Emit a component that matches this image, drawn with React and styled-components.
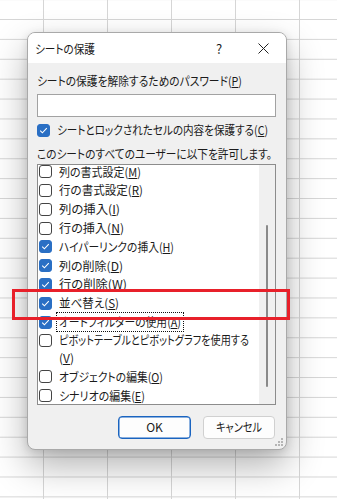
import React, { useLayoutEffect, useRef, useState } from "react";
import styled, { createGlobalStyle } from "styled-components";

const Global = createGlobalStyle`
  html, body { margin: 0; padding: 0; }
  body {
    width: 337px;
    height: 499px;
    overflow: hidden;
    font-family: "Noto Sans CJK JP", "Noto Sans", sans-serif;
    font-feature-settings: "palt";
    color: #1b1b1b;
  }
`;

const Sheet = styled.div`
  position: relative;
  width: 337px;
  height: 499px;
  background-color: #fff;
  background-image:
    linear-gradient(to right, #d6d6d6 0, #d6d6d6 1px, transparent 1px),
    linear-gradient(to bottom, #d6d6d6 0, #d6d6d6 1px, transparent 1px);
  background-size: 64px 100%, 100% 19.9px;
  background-position: 43px 0, 0 19px;
`;

const Dialog = styled.div`
  position: absolute;
  left: 27px;
  top: 32px;
  width: 260px;
  height: 418px;
  box-sizing: border-box;
  border: 1px solid #a9a9a9;
  border-radius: 8px;
  overflow: hidden;
  background: #f0f0f0;
  box-shadow: 0 16px 36px rgba(0, 0, 0, 0.3), 0 2px 8px rgba(0, 0, 0, 0.12);
  display: flex;
  flex-direction: column;
  font-size: 12px;
`;

const TitleBar = styled.div`
  height: 30px;
  background: #fff;
  display: flex;
  align-items: center;
  padding: 0 0 0 7px;
`;

const Title = styled.div`
  flex: 1;
`;

const TitleButton = styled.div`
  width: ${(p) => p.$w}px;
  padding-left: ${(p) => p.$pl || 0}px;
  box-sizing: border-box;
  display: flex;
  justify-content: center;
  align-items: center;
  font-size: 13px;
`;

const Body = styled.div`
  flex: 1;
  padding: 9px 10px 0 9px;
  display: flex;
  flex-direction: column;
  line-height: 18px;
`;

const Label = styled.div`
  white-space: nowrap;
`;

const Input = styled.div`
  margin-top: 4px;
  height: 23px;
  box-sizing: border-box;
  border: 1px solid #a2a2a2;
  background: #fff;
`;

const CheckRow = styled.label`
  display: flex;
  align-items: ${(p) => (p.$top ? "flex-start" : "center")};
  gap: 7px;
  margin-top: ${(p) => p.$mt || 0}px;
  padding-left: ${(p) => p.$pl || 0}px;
  min-height: 18.8px;
  white-space: nowrap;
`;

const BoxWrap = styled.span`
  flex: none;
  width: 13px;
  height: 13px;
  margin-top: ${(p) => (p.$top ? 3 : 0)}px;
  box-sizing: border-box;
  border-radius: 3px;
  border: 1px solid ${(p) => (p.$checked ? "#2a6fc4" : "#444")};
  background: ${(p) => (p.$checked ? "#2a6fc4" : "#fff")};
  display: flex;
  align-items: center;
  justify-content: center;
`;

const Text = styled.span`
  display: inline-block;
`;

const FitOuter = styled.span`
  display: inline-block;
  width: ${(p) => p.$w}px;
  white-space: nowrap;
  ${(p) =>
    p.$focus &&
    `outline: 1px dotted #111; outline-offset: 0px; padding: 0 2px; margin-left: -2px;`}
`;

const FitInner = styled.span`
  display: inline-block;
  white-space: nowrap;
  transform-origin: 0 50%;
`;

function Fit({ w, focus, children }) {
  const ref = useRef(null);
  const [s, setS] = useState(1);
  useLayoutEffect(() => {
    const n = ref.current ? ref.current.getBoundingClientRect().width : 0;
    if (n) setS(w / n);
  }, [w]);
  return (
    <FitOuter $w={w} $focus={focus}>
      <FitInner ref={ref} style={{ transform: `scaleX(${s})` }}>
        {children}
      </FitInner>
    </FitOuter>
  );
}

const Hint = styled.div`
  margin-top: 5px;
  white-space: nowrap;
`;

const ListBox = styled.div`
  margin-top: 1px;
  height: 241px;
  box-sizing: border-box;
  border: 1px solid #8c8c8c;
  background: #fff;
  display: flex;
  overflow: hidden;
`;

const ListInner = styled.div`
  flex: 1;
  min-width: 0;
  overflow: hidden;
  margin-top: -2.5px;
`;

const Track = styled.div`
  flex: none;
  width: 16px;
  background: #f0f0f0;
  display: flex;
  justify-content: center;
  padding-top: 60px;
`;

const Thumb = styled.div`
  width: 2px;
  height: 162px;
  border-radius: 1px;
  background: #8a8a8a;
`;

const Buttons = styled.div`
  margin-top: 11px;
  display: flex;
  justify-content: flex-end;
  gap: 12px;
  padding-right: 1px;
`;

const Button = styled.div`
  width: ${(p) => p.$w}px;
  height: 23px;
  box-sizing: border-box;
  border-radius: 4px;
  background: #fdfdfd;
  border: 1px solid ${(p) => (p.$primary ? "#1a64c0" : "#d0d0d0")};
  ${(p) => p.$primary && "box-shadow: inset 0 0 0 0.5px #1a64c0;"}
  display: flex;
  align-items: center;
  justify-content: center;
`;

const Grip = styled.svg`
  position: absolute;
  right: 2px;
  bottom: 2px;
`;

const Highlight = styled.div`
  position: absolute;
  left: 12px;
  top: 289px;
  width: 278px;
  height: 31px;
  box-sizing: border-box;
  border: 3px solid #e8202a;
`;

function Check({ checked, top }) {
  return (
    <BoxWrap $checked={checked} $top={top}>
      {checked && (
        <svg width="9" height="9" viewBox="0 0 9 9">
          <polyline
            points="1.2,4.6 3.4,6.8 7.8,2.2"
            fill="none"
            stroke="#fff"
            strokeWidth="1.1"
          />
        </svg>
      )}
    </BoxWrap>
  );
}

const items = [
  { t: "列の書式設定", k: "M", c: false, w: 82 },
  { t: "行の書式設定", k: "R", c: false, w: 84 },
  { t: "列の挿入", k: "I", c: false, w: 61 },
  { t: "行の挿入", k: "N", c: false, w: 65 },
  { t: "ハイパーリンクの挿入", k: "H", c: true, w: 115 },
  { t: "列の削除", k: "D", c: true, w: 64 },
  { t: "行の削除", k: "W", c: true, w: 68 },
  { t: "並べ替え", k: "S", c: true, w: 60 },
  { t: "オートフィルターの使用", k: "A", c: true, w: 122, focus: true },
  { t: "ピボットテーブルとピボットグラフを使用する", k: "V", c: false, w: 190, wrap: true },
  { t: "オブジェクトの編集", k: "O", c: false, w: 104 },
  { t: "シナリオの編集", k: "E", c: false, w: 86 },
];

export default function App() {
  return (
    <>
      <Global />
      <Sheet>
        <Dialog>
          <TitleBar>
            <Title>
              <Fit w={60}>シートの保護</Fit>
            </Title>
            <TitleButton $w={44} $pl={2}>?</TitleButton>
            <TitleButton $w={46}>
              <svg width="11" height="11" viewBox="0 0 11 11">
                <path d="M0.5 0.5 L10.5 10.5 M10.5 0.5 L0.5 10.5" stroke="#222" strokeWidth="1" />
              </svg>
            </TitleButton>
          </TitleBar>
          <Body>
            <Label>
              <Fit w={205}>
                シートの保護を解除するためのパスワード(<u>P</u>)
              </Fit>
            </Label>
            <Input />
            <CheckRow $mt={4}>
              <Check checked />
              <Fit w={211}>
                シートとロックされたセルの内容を保護する(<u>C</u>)
              </Fit>
            </CheckRow>
            <Hint>
              <Fit w={235}>このシートのすべてのユーザーに以下を許可します。</Fit>
            </Hint>
            <ListBox>
              <ListInner>
                {items.map((it) => (
                  <CheckRow key={it.k} $pl={1} $top={it.wrap}>
                    <Check checked={it.c} top={it.wrap} />
                    {it.wrap ? (
                      <Text>
                        <Fit w={it.w}>{it.t}</Fit>
                        <br />(<u>{it.k}</u>)
                      </Text>
                    ) : (
                      <Fit w={it.w} focus={it.focus}>
                        {it.t}(<u>{it.k}</u>)
                      </Fit>
                    )}
                  </CheckRow>
                ))}
              </ListInner>
              <Track>
                <Thumb />
              </Track>
            </ListBox>
            <Buttons>
              <Button $primary $w={73}>OK</Button>
              <Button $w={72}>
                <Fit w={46}>キャンセル</Fit>
              </Button>
            </Buttons>
          </Body>
          <Grip width="10" height="10" viewBox="0 0 10 10">
            <rect x="7" y="1" width="2" height="2" fill="#b5b5b5" />
            <rect x="4" y="4" width="2" height="2" fill="#b5b5b5" />
            <rect x="7" y="4" width="2" height="2" fill="#b5b5b5" />
            <rect x="1" y="7" width="2" height="2" fill="#b5b5b5" />
            <rect x="4" y="7" width="2" height="2" fill="#b5b5b5" />
            <rect x="7" y="7" width="2" height="2" fill="#b5b5b5" />
          </Grip>
        </Dialog>
        <Highlight />
      </Sheet>
    </>
  );
}
